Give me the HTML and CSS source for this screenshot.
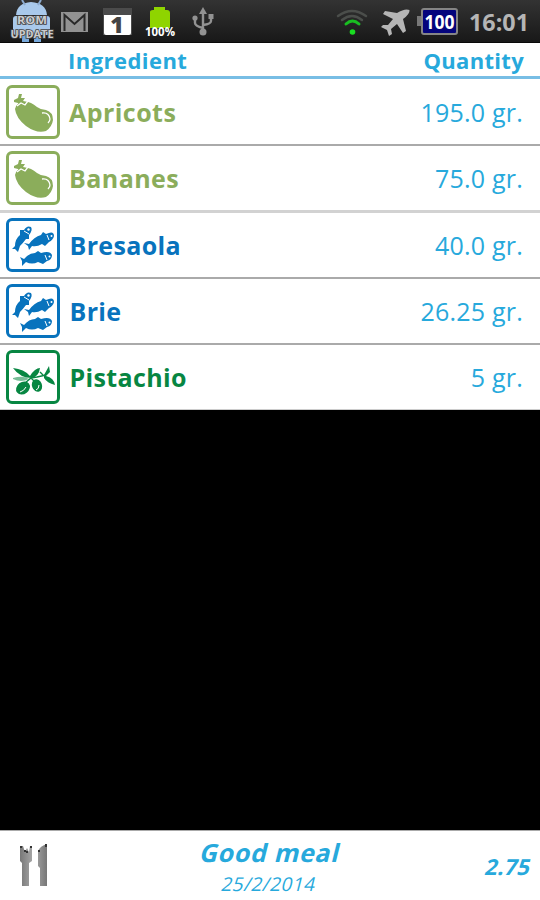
FILE: index.html
```
<!DOCTYPE html>
<html lang="en">
<head>
<meta charset="utf-8">
<title>Good meal</title>
<link rel="stylesheet" href="styles.css">
</head>
<body>
<svg class="defs" aria-hidden="true">
  <symbol id="eggplant" viewBox="3 3 48 48">
    <path fill="currentColor" d="M9 24Q10 18 17 17Q24 16 31 22Q35 25 40 25Q47 27 47 35Q46 42 40 46Q31 49 20 41Q10 33 9 24ZM8 15L12 13L13 9L16 9L15 13L19 13L17 16L22 17L18 19L14 22L12 18L8 17Z"/>
    <path fill="none" stroke="#fff" stroke-width="1.3" d="M11 21L15 18L19 20L22 16M36 28Q43 27 44 34Q44 36 42 38"/>
  </symbol>
  <symbol id="fishes" viewBox="3 3 48 48">
    <g fill="currentColor">
      <path d="M6 31L9 28Q9 21 14 17L14 12L18 12Q21 7 25 9Q27 12 23 17L23 21L20 21Q17 25 14 28L12 34L9 31Z"/>
      <path d="M18 25L23 26Q28 19 35 17L37 14L40 16Q48 12 48 18Q47 22 43 24L39 28L36 26Q31 29 26 28L23 32L22 28Z"/>
      <path d="M14 39L18 41Q23 35 29 35L32 33L35 35Q44 32 46 37Q46 42 41 43L37 46L32 44Q26 47 20 44L16 48L16 43Z"/>
    </g>
    <g fill="none" stroke="#fff" stroke-width="1"><path d="M18 13L23 16M41 17L43 22M39 37L41 42"/></g>
    <g fill="#fff"><circle cx="22.500" cy="11.500" r="1.200"/><circle cx="45.500" cy="18" r="1"/><circle cx="43.500" cy="38.500" r="1"/></g>
  </symbol>
  <symbol id="olives" viewBox="3 3 48 48">
    <g fill="currentColor"><ellipse cx="17" cy="38" rx="7.500" ry="6" transform="rotate(-38 17 38)"/><ellipse cx="31" cy="35.500" rx="5" ry="6.500" transform="rotate(-20 31 35.500)"/>
    <path d="M7 18Q18 19 24 26Q29 18 34 18Q33 26 26 28Q14 28 7 18ZM38 25L43 16L44 22L40 26Q48 28 49 35Q41 33 38 28Z"/></g>
    <path fill="currentColor" opacity=".55" d="M7 28Q17 25 23 29Q15 33 7 29Z"/>
    <path fill="none" stroke="currentColor" stroke-width="1.4" d="M19 33L25 28L31 27L40 25M25 28L31 34M37 25L34 22"/>
    <path fill="none" stroke="#fff" stroke-width="1" d="M14 42Q18 41 20 37M30 40Q33 39 33 35"/>
  </symbol>
</svg>
<div class="screen">
  <header class="status">
    <svg viewBox="0 0 220 43" width="220" height="43" aria-hidden="true">
      <g fill="#a9c9eb"><path d="M16 15Q17 3 31 2Q46 3 47 15Z"/><rect x="13" y="16" width="37" height="19" rx="3"/></g><g fill="#78a9dc"><rect x="22" y="34" width="7" height="8"/><rect x="34" y="34" width="7" height="8"/></g>
      <path d="M22 0L25 5M41 0L38 5" stroke="#8caace" stroke-width="2"/>
      <g class="rom" text-anchor="middle"><text x="32" y="24" textLength="30" lengthAdjust="spacingAndGlyphs">ROM</text><text x="32" y="38" textLength="43" lengthAdjust="spacingAndGlyphs">UPDATE</text></g>
      <rect x="61" y="12" width="27" height="20" fill="#929292"/><path d="M64.500 31V15L74.500 24L84.500 15V31" fill="none" stroke="#292929" stroke-width="2"/>
      <path d="M103 8H132V35H103Z" fill="#4b4b4b"/><path d="M104 15H131V33Q131 35 129 35H106Q104 35 104 33Z" fill="#fff"/><text class="day" x="117" y="33" text-anchor="middle">1</text>
      <path fill="#8fd400" d="M150 12Q150 10 153 10H154V7H165V10H167Q170 10 170 13V28H150Z"/><text class="percent" x="160" y="35.500" text-anchor="middle" textLength="30" lengthAdjust="spacingAndGlyphs">100%</text>
      <g fill="none" stroke="#929292" stroke-width="2.400"><path d="M203 31V12M203 28Q195 26 195 23V19M203 25Q211 24 211 21V18"/></g><g fill="#929292"><path d="M203 7L207 14H199Z"/><circle cx="203" cy="32" r="3.500"/><circle cx="195" cy="18" r="2.600"/><rect x="208.500" y="14" width="5" height="5"/></g>
    </svg>
    <svg viewBox="330 0 210 43" width="210" height="43" aria-hidden="true">
      <g fill="none" stroke-width="2.500" stroke-linecap="round"><path d="M338 16Q352 6 366 16M342 20Q352 12 362 20" stroke="#4b4e4b"/><path d="M346 24Q352.500 18 359 24" stroke="#19bd21" stroke-width="3"/></g><circle cx="352.500" cy="32" r="2.800" fill="#19dd21"/>
      <path fill="#b5b5b5" d="M409.500 10Q410 14 403 19L406 31L403 33L397 24L391 29L392 34L389 36L387 30L381 27L383 25L388 25L393 19L383 14L385 11L397 13Q405 8 409.500 10Z"/>
      <path fill="#777" d="M421 16H417V26H421Z"/><rect x="422" y="9" width="35" height="25" rx="2" fill="#04047c" stroke="#858585" stroke-width="2"/><text class="charge" x="439.500" y="28.500" text-anchor="middle" textLength="30" lengthAdjust="spacingAndGlyphs">100</text>
      <text class="clock" x="469" y="31" textLength="60" lengthAdjust="spacingAndGlyphs">16:01</text>
    </svg>
  </header>
  <div class="heading"><span>Ingredient</span><span class="qhead">Quantity</span></div>
  <main>
    <div class="row veg first"><svg class="food"><use href="#eggplant"/></svg><span class="name">Apricots</span><span class="amount">195.0 gr.</span></div>
    <div class="row veg wide"><svg class="food"><use href="#eggplant"/></svg><span class="name">Bananes</span><span class="amount">75.0 gr.</span></div>
    <div class="row protein"><svg class="food"><use href="#fishes"/></svg><span class="name">Bresaola</span><span class="amount">40.0 gr.</span></div>
    <div class="row protein"><svg class="food"><use href="#fishes"/></svg><span class="name">Brie</span><span class="amount">26.25 gr.</span></div>
    <div class="row fat"><svg class="food"><use href="#olives"/></svg><span class="name">Pistachio</span><span class="amount">5 gr.</span></div>
  </main>
  <footer>
    <svg class="cutlery" viewBox="0 0 30 44" aria-hidden="true"><defs><linearGradient id="steel"><stop stop-color="#777"/><stop offset=".5" stop-color="#aaa"/><stop offset="1" stop-color="#777"/></linearGradient></defs><path fill="url(#steel)" d="M0 2L3 2L5 8L7 4L9 8L10 2H12V17L9 19V42H2V19L0 17ZM27 0V42H20V24L18 22V7Q20 2 27 0Z"/><path d="M1 2V4M5 6V8M7 7V9M11 2V4M19 6V8M26 0V3" stroke="#333" stroke-width="2"/></svg>
    <div class="meal"><div class="title">Good meal</div><div class="date">25/2/2014</div></div>
    <div class="score">2.75</div>
  </footer>
</div>
</body>
</html>
```
FILE: styles.css
```
* { box-sizing: border-box; }
body { margin: 0; background: #000; font-family: "Open Sans", "Noto Sans", sans-serif; color: #27a9dc; }
.defs { display: block; width: 0; height: 0; }
.screen { width: 540px; height: 900px; display: flex; flex-direction: column; }
.status { height: 43px; flex: none; display: flex; justify-content: space-between; background: linear-gradient(#333, #181818); border-bottom: 1px solid #080808; }
.status svg { display: block; }
.rom { font-size: 10px; font-weight: 700; fill: #ccc; stroke: #444; stroke-width: 1.5px; paint-order: stroke; }
.percent { font-size: 13px; font-weight: 700; fill: #fff; }
.day { font-size: 23px; font-weight: 800; fill: #444; }
.charge { font-size: 20px; font-weight: 700; fill: #fff; }
.clock { font-size: 23px; font-weight: 700; fill: #b5b5b5; }
.heading { height: 36px; flex: none; display: flex; justify-content: space-between; padding: 0 16px 0 68px; border-bottom: 3px solid #78bee5; background: #fff; font-size: 22px; line-height: 34px; font-weight: 700; letter-spacing: .45px; }
.qhead { letter-spacing: .3px; }
main { flex: none; }
.row { height: 66px; display: flex; align-items: center; background: #fff; padding: 0 17px 0 6px; border-bottom: 2px solid #aaa; }
.row.first { height: 67px; }
.row.wide { height: 67px; border-bottom: 3px solid #d2d2d2; }
.row:last-child { height: 65px; border-bottom: 1px solid #ccc; }
.food { width: 54px; height: 54px; flex: none; border: 3px solid; border-radius: 6px; }
.name { margin-left: 9px; font-size: 25px; font-weight: 700; letter-spacing: .45px; }
.protein .name, .fat .name { margin-left: 9.5px; letter-spacing: .35px; }
.amount { margin-left: auto; font-size: 25px; letter-spacing: .2px; }
.veg { color: #8bad5b; }
.protein { color: #0873bd; }
.fat { color: #078642; }
.amount { color: #27a9dc; }
footer { height: 70px; flex: none; margin-top: auto; display: grid; grid-template-columns: 80px 1fr 80px; align-items: center; background: #fff; border-top: 1px solid #aaa; }
.cutlery { width: 30px; height: 44px; margin-left: 20px; }
.meal { display: flex; flex-direction: column; align-items: center; padding-top: 2px; }
.title, .date, .score { transform: skewX(-14deg); }
.title { font-size: 25px; font-weight: 700; line-height: 34px; letter-spacing: .7px; margin-left: 1px; }
.date { font-size: 19px; line-height: 30px; letter-spacing: .45px; margin-right: 2px; }
.score { font-size: 22px; font-weight: 700; justify-self: end; margin-right: 9px; letter-spacing: .3px; }
```
